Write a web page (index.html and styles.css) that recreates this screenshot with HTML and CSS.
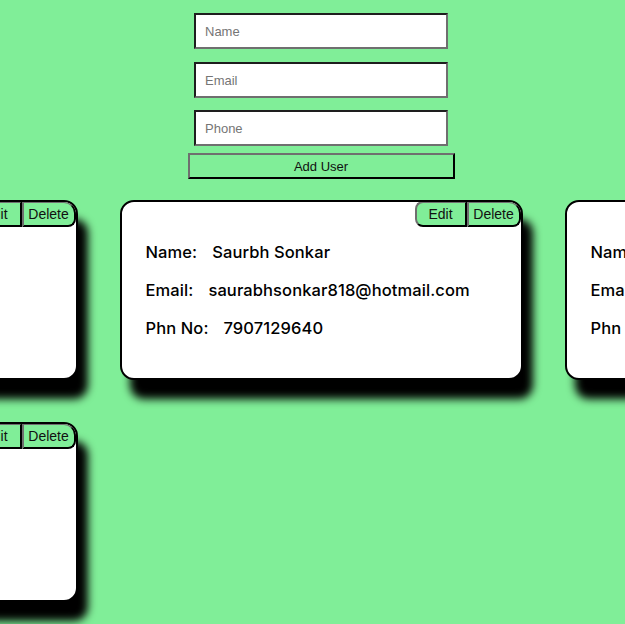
FILE: index.html
```html
<!DOCTYPE html>
<html lang="en">
<head>
    <meta charset="UTF-8">
    <meta name="viewport" content="width=device-width, initial-scale=1.0">
    <title>User Cards</title>
    <link rel="stylesheet" href="styles.css">
</head>
<body>
    <div class="page">
        <form class="user-form" id="user-form">
            <input type="text" class="field" placeholder="Name">
            <input type="email" class="field" placeholder="Email">
            <input type="text" class="field" placeholder="Phone">
            <button type="button" class="add-btn">Add User</button>
        </form>

        <div class="cards">
            <div class="card">
                <div class="actions">
                    <button class="act edit">Edit</button>
                    <button class="act delete">Delete</button>
                </div>
                <div class="info">
                    <p><span class="label">Name:</span>Rahul Verma</p>
                    <p><span class="label">Email:</span>rahulverma@gmail.com</p>
                    <p><span class="label">Phn No:</span>9876543210</p>
                </div>
            </div>
            <div class="card">
                <div class="actions">
                    <button class="act edit">Edit</button>
                    <button class="act delete">Delete</button>
                </div>
                <div class="info">
                    <p><span class="label">Name:</span>Saurbh Sonkar</p>
                    <p><span class="label">Email:</span>saurabhsonkar818@hotmail.com</p>
                    <p><span class="label">Phn No:</span>7907129640</p>
                </div>
            </div>
            <div class="card">
                <div class="actions">
                    <button class="act edit">Edit</button>
                    <button class="act delete">Delete</button>
                </div>
                <div class="info">
                    <p><span class="label">Name:</span>Amit Kumar</p>
                    <p><span class="label">Email:</span>amitkumar@yahoo.com</p>
                    <p><span class="label">Phn No:</span>9123456780</p>
                </div>
            </div>
            <div class="card">
                <div class="actions">
                    <button class="act edit">Edit</button>
                    <button class="act delete">Delete</button>
                </div>
                <div class="info">
                    <p><span class="label">Name:</span>Priya Singh</p>
                    <p><span class="label">Email:</span>priyasingh@gmail.com</p>
                    <p><span class="label">Phn No:</span>9988776655</p>
                </div>
            </div>
        </div>
    </div>
</body>
</html>
```

FILE: styles.css
```css
/* page background and layout */
html {
    overflow: hidden;
}

body {
    margin: 0;
    padding-bottom: 40px;
    background-color: #80ee98;
    font-family: "Liberation Sans", Arial, sans-serif;
}

.page {
    padding-left: 17px;
}

.user-form {
    display: flex;
    flex-direction: column;
    align-items: center;
    gap: 12.5px;
    padding-top: 13px;
}

.field {
    box-sizing: border-box;
    width: 254px;
    height: 36px;
    margin: 0;
    padding: 1px 9px 0;
    font-family: "Liberation Sans", Arial, sans-serif;
    font-size: 13px;
    background-color: #fff;
    border: 2px solid;
    border-color: #1e1e1e #6f6f6f #6f6f6f #1e1e1e;
    outline: none;
}

.field::placeholder {
    color: #757575;
}

.add-btn {
    box-sizing: border-box;
    width: 267px;
    height: 26px;
    margin-top: -5.5px;
    padding: 0;
    font-family: "Liberation Sans", Arial, sans-serif;
    font-size: 13px;
    color: #111;
    background-color: #80ee98;
    border: 2px solid;
    border-color: #6f6f6f #000 #000 #6f6f6f;
    cursor: pointer;
}

.cards {
    display: grid;
    grid-template-columns: repeat(3, 403px);
    justify-content: center;
    column-gap: 42px;
    row-gap: 42px;
    margin-top: 21px;
}

.card {
    box-sizing: border-box;
    height: 180px;
    background-color: #fff;
    border: 2px solid #000;
    border-radius: 14px;
    box-shadow: 10px 19px 8px #000;
    overflow: hidden;
}

.actions {
    display: flex;
    justify-content: flex-end;
    margin-top: -1px;
}

.act {
    box-sizing: border-box;
    height: 26px;
    padding: 0;
    font-family: "Liberation Sans", Arial, sans-serif;
    font-size: 14px;
    color: #111;
    background-color: #80ee98;
    border: 2px solid;
    border-color: #6f6f6f #000 #000 #6f6f6f;
    cursor: pointer;
}

.edit {
    width: 52px;
    border-radius: 8px 0 0 8px;
}

.delete {
    width: 54px;
    border-radius: 0 12px 8px 0;
}

.info {
    padding: 6px 0 0 24px;
    font-family: Inter, "Noto Sans", sans-serif;
    font-size: 16.5px;
    font-weight: 500;
    letter-spacing: 0.1px;
    color: #000;
}

.info p {
    margin: 0;
    line-height: 38px;
    white-space: nowrap;
}

.label {
    margin-right: 15px;
}
```
